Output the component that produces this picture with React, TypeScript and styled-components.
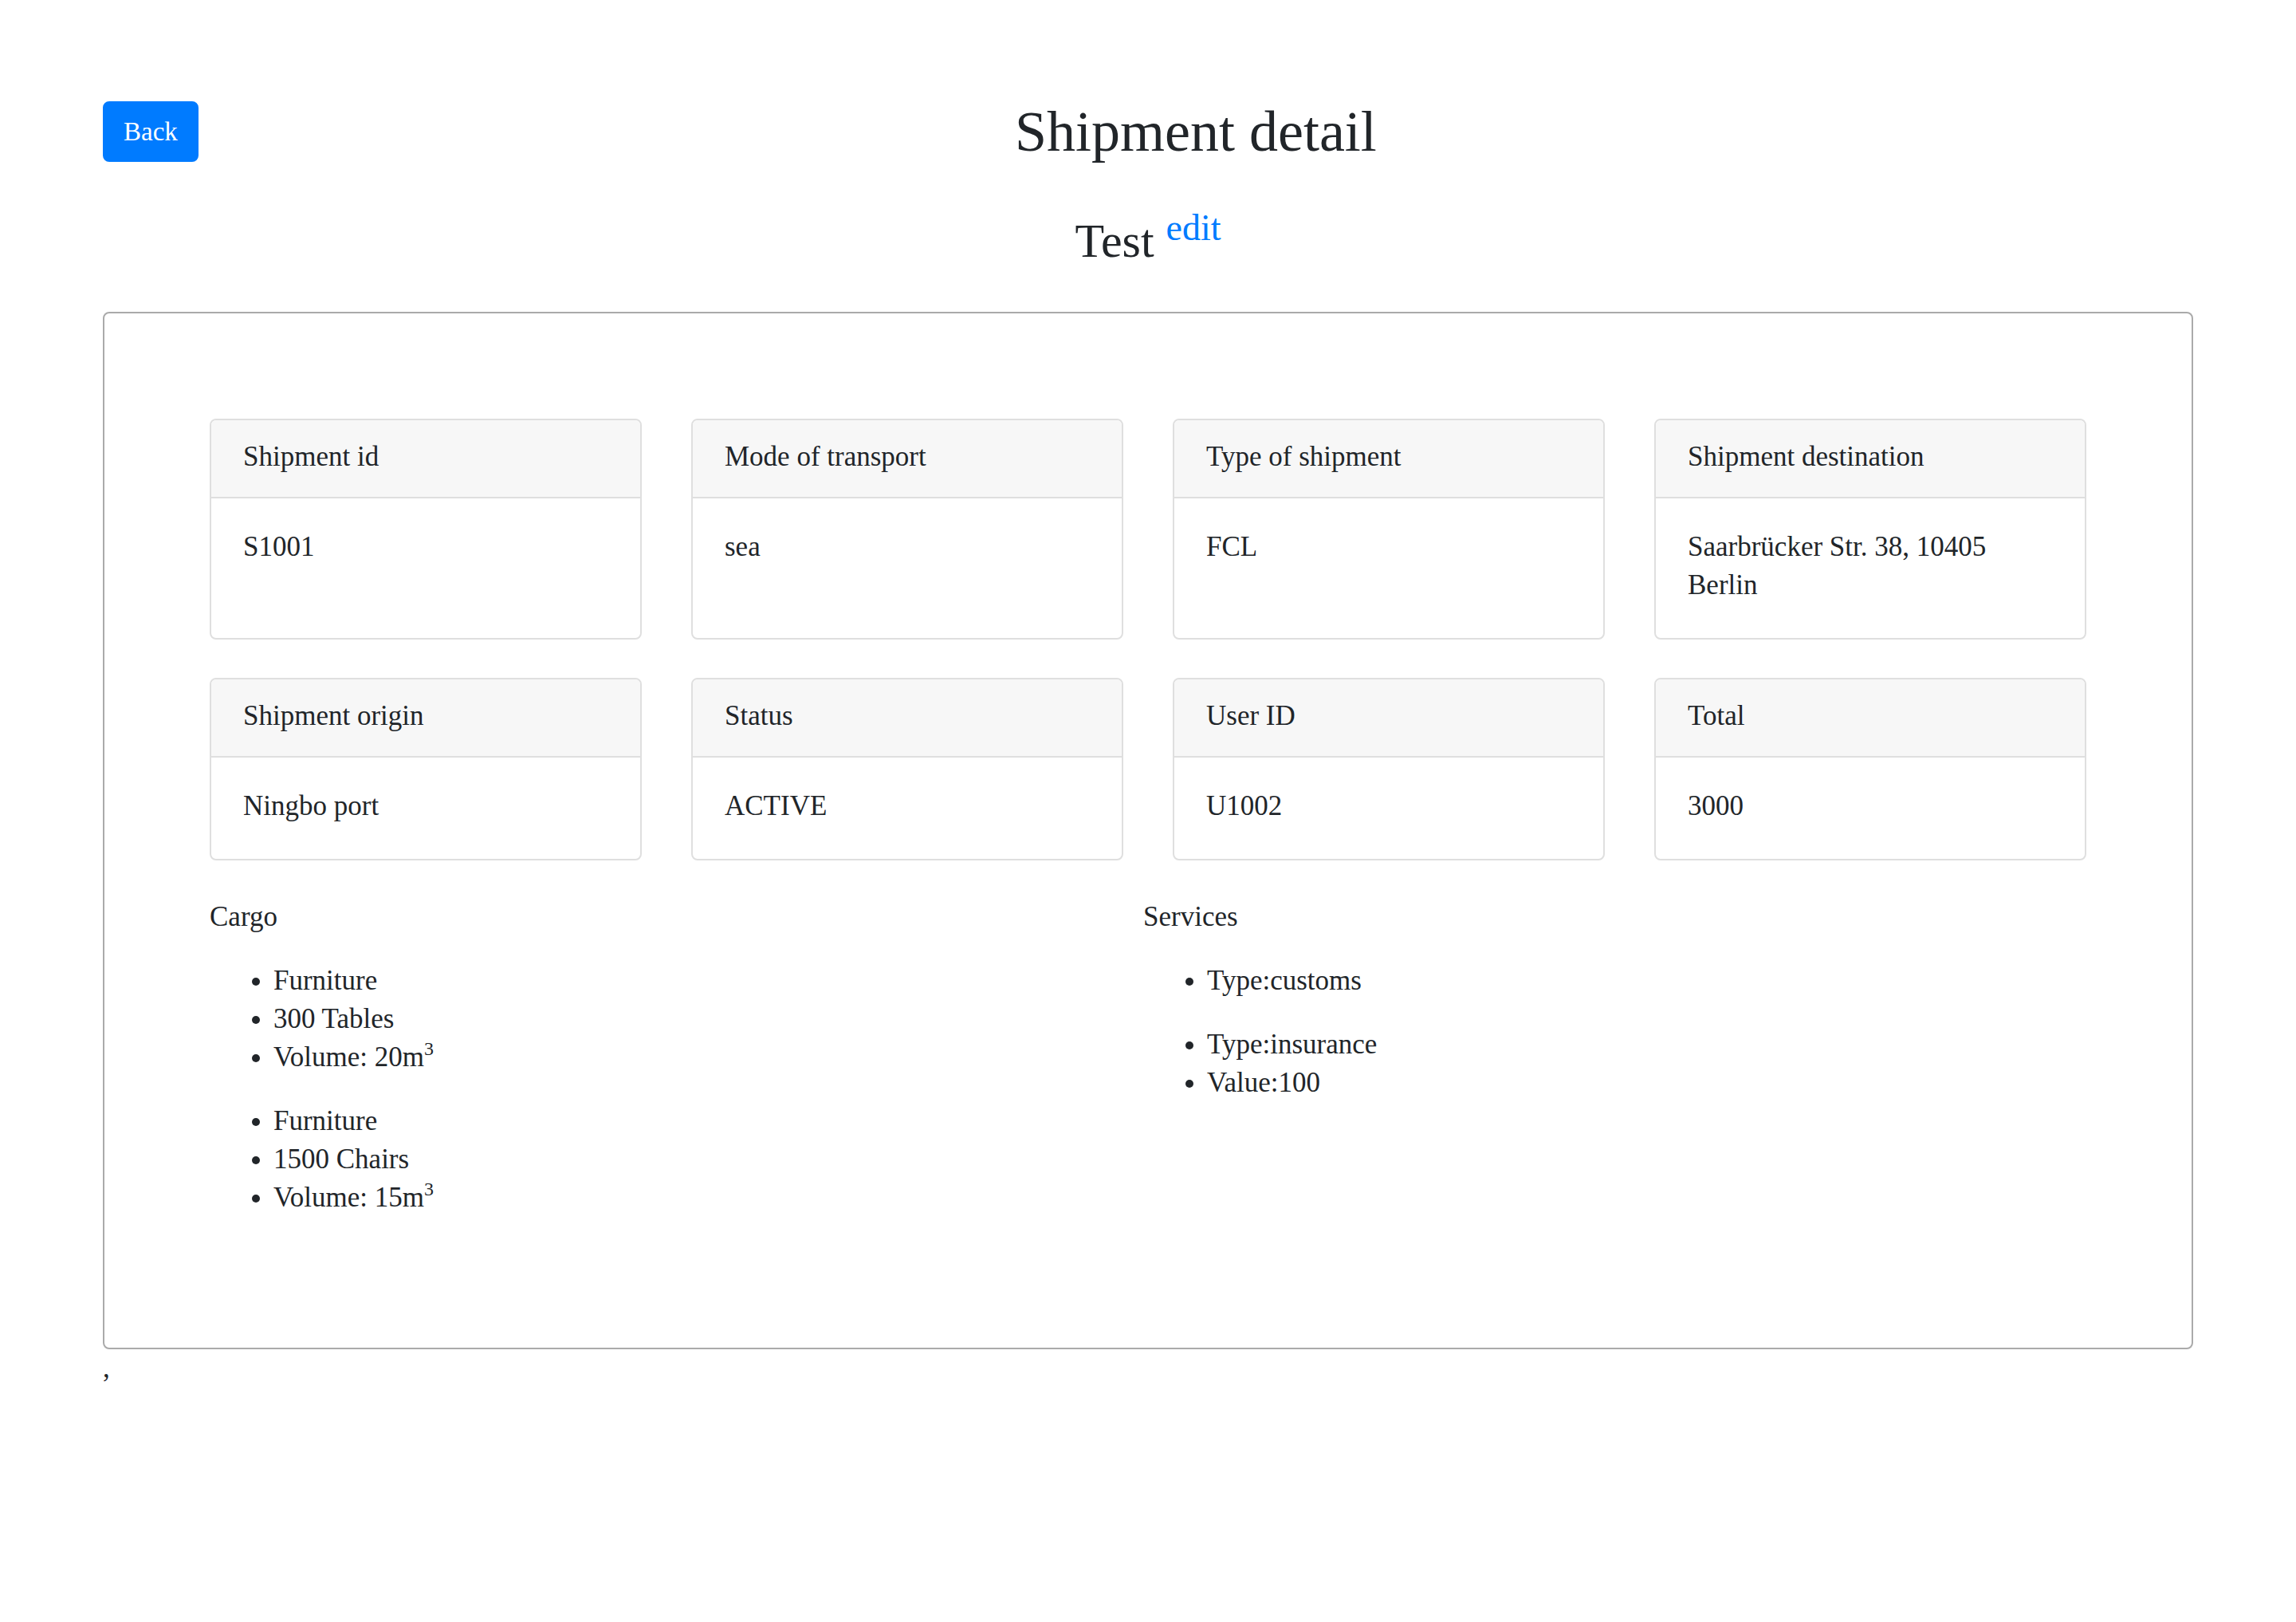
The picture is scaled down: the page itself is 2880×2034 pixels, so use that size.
import React from "react";
import styled, { createGlobalStyle } from "styled-components";

const GlobalStyle = createGlobalStyle`
  html, body {
    margin: 0;
    padding: 0;
    background: #ffffff;
  }
  body {
    font-family: "Liberation Serif", Georgia, "Times New Roman", serif;
    font-size: 35px;
    line-height: 48px;
    color: #212529;
  }
  * { box-sizing: border-box; }
`;

const Page = styled.div`
  padding: 122px 129px 200px 129px;
`;

const Header = styled.div`
  display: flex;
  align-items: center;
`;

const BackButton = styled.button`
  font-family: inherit;
  font-size: 33px;
  line-height: 48px;
  color: #ffffff;
  background: #007bff;
  border: 2px solid #007bff;
  border-radius: 8px;
  padding: 12px 24px;
  cursor: pointer;
`;

const Title = styled.h1`
  flex: 1;
  margin: 0;
  text-align: center;
  font-size: 72px;
  font-weight: 400;
  line-height: 1.2;
`;

const Subtitle = styled.h3`
  margin: 58px 0 53px;
  text-align: center;
  font-size: 60px;
  font-weight: 400;
  line-height: 1.2;
`;

const EditLink = styled.a`
  position: relative;
  top: -21px;
  font-size: 46px;
  line-height: 0;
  vertical-align: baseline;
  color: #007bff;
  text-decoration: none;
`;

const Box = styled.div`
  border: 2px solid #aaaaaa;
  border-radius: 8px;
  padding: 132px;
`;

const CardGrid = styled.div`
  display: grid;
  grid-template-columns: repeat(4, 1fr);
  column-gap: 62px;
  row-gap: 48px;
  margin-bottom: 47px;
`;

const Card = styled.div`
  display: flex;
  flex-direction: column;
  border: 2px solid #dfdfdf;
  border-radius: 8px;
  overflow: hidden;
  background: #ffffff;
`;

const CardHeader = styled.div`
  background: #f7f7f7;
  border-bottom: 2px solid #dfdfdf;
  padding: 22px 40px 26px;
`;

const CardBody = styled.div`
  flex: 1;
  padding: 37px 40px 42px;
`;

const Sections = styled.div`
  display: grid;
  grid-template-columns: 1171px 1fr;
`;

const Section = styled.div``;

const SectionLabel = styled.div`
  margin-bottom: 32px;
`;

const List = styled.ul`
  margin: 0 0 32px;
  padding-left: 80px;
  list-style: disc;
`;

const Item = styled.li``;

const Sup = styled.sup`
  font-size: 24px;
  line-height: 0;
  position: relative;
  top: -2px;
`;

const Trailing = styled.div``;

const cards: { title: string; value: string }[] = [
  { title: "Shipment id", value: "S1001" },
  { title: "Mode of transport", value: "sea" },
  { title: "Type of shipment", value: "FCL" },
  { title: "Shipment destination", value: "Saarbrücker Str. 38, 10405 Berlin" },
  { title: "Shipment origin", value: "Ningbo port" },
  { title: "Status", value: "ACTIVE" },
  { title: "User ID", value: "U1002" },
  { title: "Total", value: "3000" },
];

const cargo = [
  { type: "Furniture", desc: "300 Tables", volume: "20" },
  { type: "Furniture", desc: "1500 Chairs", volume: "15" },
];

const services: string[][] = [
  ["Type:customs"],
  ["Type:insurance", "Value:100"],
];

export default function App() {
  return (
    <>
      <GlobalStyle />
      <Page>
        <Header>
          <BackButton>Back</BackButton>
          <Title>Shipment detail</Title>
        </Header>
        <Subtitle>
          Test <EditLink href="#">edit</EditLink>
        </Subtitle>
        <Box>
          <CardGrid>
            {cards.map((c) => (
              <Card key={c.title}>
                <CardHeader>{c.title}</CardHeader>
                <CardBody>{c.value}</CardBody>
              </Card>
            ))}
          </CardGrid>
          <Sections>
            <Section>
              <SectionLabel>Cargo</SectionLabel>
              {cargo.map((c, i) => (
                <List key={i}>
                  <Item>{c.type}</Item>
                  <Item>{c.desc}</Item>
                  <Item>
                    Volume: {c.volume}m<Sup>3</Sup>
                  </Item>
                </List>
              ))}
            </Section>
            <Section>
              <SectionLabel>Services</SectionLabel>
              {services.map((s, i) => (
                <List key={i}>
                  {s.map((line) => (
                    <Item key={line}>{line}</Item>
                  ))}
                </List>
              ))}
            </Section>
          </Sections>
        </Box>
        <Trailing>,</Trailing>
      </Page>
    </>
  );
}
